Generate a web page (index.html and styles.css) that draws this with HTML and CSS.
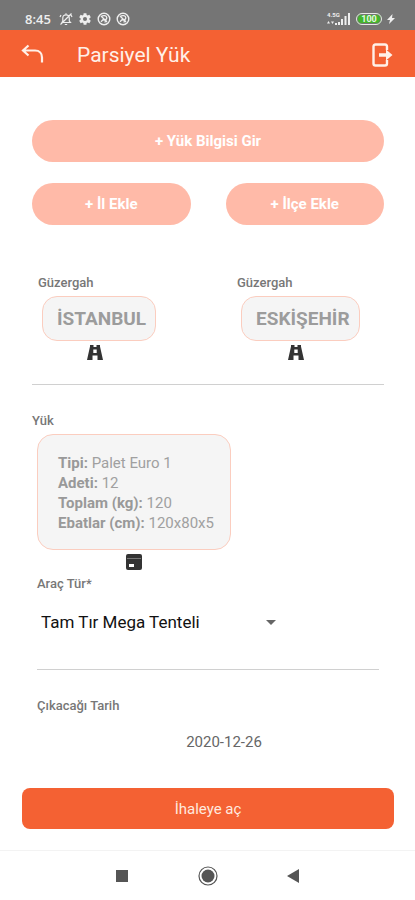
FILE: index.html
```html
<!DOCTYPE html>
<html lang="tr">
<head>
<meta charset="utf-8">
<meta name="viewport" content="width=device-width, initial-scale=1">
<title>Parsiyel Yük</title>
<link rel="stylesheet" href="styles.css">
</head>
<body>
<svg class="defs" aria-hidden="true">
  <symbol id="road" viewBox="0 0 16 15">
    <path d="M3 0h3.500v2h3V0H13v1.500L16 15h-5.500v-4.500h-5V15H0L3 1.500zM6.300 4.500v3.500h3.400V4.500z" fill-rule="evenodd"/>
  </symbol>
  <symbol id="blocked" viewBox="0 0 14 14">
    <circle cx="7" cy="7" r="5.800" fill="none" stroke="currentColor" stroke-width="1.400"/>
    <path d="M4.500 4.200C6.500 3 9.800 3.600 9.800 5.800 9.800 7.600 8 8 6.500 8M4 4l6 6M4 9.800l2.500-2.600M7.500 10.300l2.500-1.500" fill="none" stroke="currentColor" stroke-width="1.300"/>
  </symbol>
</svg>
<div class="app">
  <div class="status">
    <div class="status-group">
      <span class="clock">8:45</span>
      <svg width="14" height="14" viewBox="0 0 14 14" fill="none" stroke="currentColor" stroke-width="1.200"><path d="M3 10.500h8.500L10.300 9V6C10.300 4 9 2.800 7 2.800S3.800 4 3.800 6v3zM5.800 12.500h2.400M7 1.200v1.400M12.500 1.500l-11 11M1 5l1-2M12 3l1 2"/></svg>
      <svg width="14" height="14" viewBox="0 0 24 24" fill="currentColor"><path d="M19.400 13a7.500 7.500 0 0 0 0-2l2.500-1.900-2.400-4.200-3 1.200a7.500 7.500 0 0 0-1.700-1L14.400 2H9.600l-.4 3.100a7.500 7.500 0 0 0-1.700 1l-3-1.200-2.400 4.200L4.600 11a7.500 7.500 0 0 0 0 2l-2.500 1.900 2.400 4.200 3-1.200a7.500 7.500 0 0 0 1.700 1l.4 3.100h4.800l.4-3.100a7.500 7.500 0 0 0 1.700-1l3 1.200 2.400-4.200zM12 15.500a3.500 3.500 0 1 1 0-7 3.500 3.500 0 0 1 0 7z"/></svg>
      <svg width="14" height="14"><use href="#blocked"/></svg>
      <svg width="14" height="14"><use href="#blocked"/></svg>
    </div>
    <div class="status-group status-right">
      <div class="signal">
        <span class="network">4.5G</span>
        <svg width="24" height="14" viewBox="0 0 24 14" fill="currentColor"><path d="M8 11h2v2H8zM11 10h2v3h-2zM14 7h2v6h-2zM17.500 4h2v9h-2zM21 1h2v12h-2zM1.500 9L3 11.500H0zM5.500 12L4 9.500h3z"/></svg>
      </div>
      <span class="battery">100</span>
      <svg width="8" height="12" viewBox="0 0 8 12" fill="currentColor"><path d="M5.500 1L0 7h3L2 11l6-6H5z"/></svg>
    </div>
  </div>

  <header class="bar">
    <button class="icon-button" type="button" aria-label="Geri">
      <svg width="24" height="24" viewBox="0 0 24 24" fill="none" stroke="currentColor" stroke-width="2.200"><path d="M8.500 2.500L3 7.500l5.500 5M3.500 7.500H15c4.500 0 7 3 7 7v5"/></svg>
    </button>
    <h1 class="title">Parsiyel Yük</h1>
    <button class="icon-button" type="button" aria-label="Çıkış">
      <svg width="24" height="24" viewBox="0 0 24 24"><path d="M16 7V3.500Q16 1.500 14 1.500H4.500Q2.500 1.500 2.500 3.500v17Q2.500 22.500 4.500 22.500H14q2 0 2-2V17" fill="none" stroke="currentColor" stroke-width="2.400"/><path d="M8 10.300h7V6.500l6.500 5.500-6.500 5.500v-3.800H8z" fill="currentColor"/></svg>
    </button>
  </header>

  <main class="content">
    <div class="actions">
      <button class="pill wide" type="button">+ Yük Bilgisi Gir</button>
      <button class="pill" type="button">+ İl Ekle</button>
      <button class="pill" type="button">+ İlçe Ekle</button>
    </div>

    <section class="routes">
      <div class="route">
        <h2 class="label">Güzergah</h2>
        <div class="stack">
          <div class="chip">İSTANBUL</div>
          <svg class="mark" width="16" height="15"><use href="#road"/></svg>
        </div>
      </div>
      <div class="route">
        <h2 class="label">Güzergah</h2>
        <div class="stack">
          <div class="chip">ESKİŞEHİR</div>
          <svg class="mark" width="16" height="15"><use href="#road"/></svg>
        </div>
      </div>
    </section>

    <section class="load">
      <h2 class="label">Yük</h2>
      <div class="stack">
        <div class="card">
          <div><b>Tipi:</b> Palet Euro 1</div>
          <div><b>Adeti:</b> 12</div>
          <div><b>Toplam (kg):</b> 120</div>
          <div><b>Ebatlar (cm):</b> 120x80x5</div>
        </div>
        <svg class="mark" width="16" height="16" viewBox="0 0 16 16"><rect width="16" height="16" rx="2"/><path d="M1 4.500h14" stroke="#777"/><path d="M3 10h5v3H3z" fill="#fff"/></svg>
      </div>
    </section>

    <section class="vehicle">
      <label class="label" for="vehicle">Araç Tür*</label>
      <div class="select-wrap">
        <select id="vehicle" class="select"><option>Tam Tır Mega Tenteli</option></select>
        <svg class="arrow" width="10" height="5" viewBox="0 0 10 5"><path d="M0 0h10L5 5z"/></svg>
      </div>
    </section>

    <section class="date">
      <label class="label" for="date">Çıkacağı Tarih</label>
      <input id="date" class="date-input" type="text" value="2020-12-26">
    </section>
  </main>

  <div class="footer">
    <button class="submit" type="button">İhaleye aç</button>
  </div>

  <nav class="system">
    <button class="icon-button" type="button" aria-label="Son uygulamalar"><svg width="24" height="24" viewBox="0 0 24 24"><path d="M6 6h12v12H6z"/></svg></button>
    <button class="icon-button" type="button" aria-label="Ana ekran"><svg width="24" height="24" viewBox="0 0 24 24"><circle cx="12" cy="12" r="6.500"/><circle cx="12" cy="12" r="9" fill="none" stroke="#555" stroke-width="1.200"/></svg></button>
    <button class="icon-button" type="button" aria-label="Geri dön"><svg width="24" height="24" viewBox="0 0 24 24"><path d="M17 5v14L5 12z"/></svg></button>
  </nav>
</div>
</body>
</html>
```
FILE: styles.css
```css
* { box-sizing: border-box; }

body {
  margin: 0;
  background: #fff;
  color: #777;
  font-family: Roboto, "Noto Sans", sans-serif;
}

button, input, select { font: inherit; border: 0; }
h1, h2 { margin: 0; }
svg { display: block; flex: none; }
.defs { display: none; }

.app {
  display: flex;
  flex-direction: column;
  min-height: 100vh;
}

.status {
  display: flex;
  justify-content: space-between;
  align-items: center;
  height: 30px;
  padding: 8px 20px 0 25px;
  background: #757575;
  color: #eee;
}

.status-group { display: flex; align-items: center; gap: 5px; }
.clock {
  margin-right: 3px;
  font: 600 13px/16px "Open Sans", sans-serif;
}
.signal { position: relative; }
.network {
  position: absolute;
  top: 0;
  left: 0;
  font-size: 6px;
  font-weight: 700;
  line-height: 6px;
}
.battery {
  width: 26px;
  border: 1px solid #e8e8e8;
  border-radius: 6px;
  background: #43b52b;
  box-shadow: inset 0 0 0 1px #757575;
  color: #e6f5e2;
  font-size: 9px;
  font-weight: 700;
  line-height: 10px;
  text-align: center;
}

.bar {
  display: flex;
  align-items: center;
  height: 47px;
  padding: 2px 20px 0;
  background: #f46133;
  color: #fff0e8;
}
.title {
  flex: 1;
  padding-left: 33px;
  font-size: 21px;
  font-weight: 400;
  line-height: 28px;
}
.icon-button {
  padding: 0;
  background: none;
  color: inherit;
}

.content { padding: 43px 31px 0 32px; }

.actions {
  display: grid;
  grid-template-columns: 1fr 1fr;
  gap: 21px 35px;
}
.pill {
  height: 42px;
  padding: 0;
  border-radius: 21px;
  background: #ffbaa8;
  color: #fff;
  font-size: 15px;
  font-weight: 700;
}
.wide { grid-column: 1 / -1; }

.label {
  display: block;
  color: #777;
  font-size: 13px;
  font-weight: 500;
  line-height: 16px;
}
.stack {
  display: flex;
  flex-direction: column;
  align-items: center;
  width: fit-content;
}
.mark { margin-top: 4px; fill: #333; }

.routes {
  display: grid;
  grid-template-columns: 199fr 153fr;
  padding: 50px 0 24px;
  border-bottom: 1px solid #d0d0d0;
}
.route { padding-left: 6px; }
.route .stack { padding: 5px 0 0 4px; }
.route .mark { margin-right: 8px; }
.chip {
  padding: 0 9px 0 14px;
  border: 1px solid #fbcdbf;
  border-radius: 15px;
  background: #f5f5f5;
  color: #9c9c9c;
  font-size: 19px;
  font-weight: 700;
  line-height: 43px;
}

.load { padding-top: 28px; }
.load .stack { padding: 5px 0 0 5px; }
.card {
  padding: 18px 16px 16px 20px;
  border: 1px solid #fbcdbf;
  border-radius: 16px;
  background: #f5f5f5;
  color: #a0a0a0;
  font-size: 15px;
  line-height: 20px;
}
.card b { color: #999; }

.vehicle {
  margin: 6px 5px 0;
  padding-bottom: 31px;
  border-bottom: 1px solid #d0d0d0;
}
.select-wrap {
  display: grid;
  align-items: center;
  width: 72%;
  margin: 14px 0 0 4px;
}
.select, .arrow { grid-area: 1 / 1; }
.select {
  appearance: none;
  height: 32px;
  padding: 0;
  background: none;
  color: #111;
  font-size: 17px;
}
.arrow { justify-self: end; margin-right: 11px; fill: #666; pointer-events: none; }

.date { padding: 28px 5px 0; }
.date-input {
  width: 100%;
  height: 28px;
  margin-top: 14px;
  padding: 0 0 0 32px;
  background: none;
  color: #666;
  font-size: 15px;
  text-align: center;
}

.footer { padding: 29px 21px 21px 22px; margin-top: auto; }
.submit {
  width: 100%;
  height: 41px;
  border-radius: 8px;
  background: #f46133;
  color: #ffe9df;
  font-size: 15px;
}

.system {
  display: flex;
  justify-content: center;
  align-items: center;
  gap: 62px;
  height: 50px;
  border-top: 1px solid #f3f3f3;
}
.system svg { fill: #555; }
```
